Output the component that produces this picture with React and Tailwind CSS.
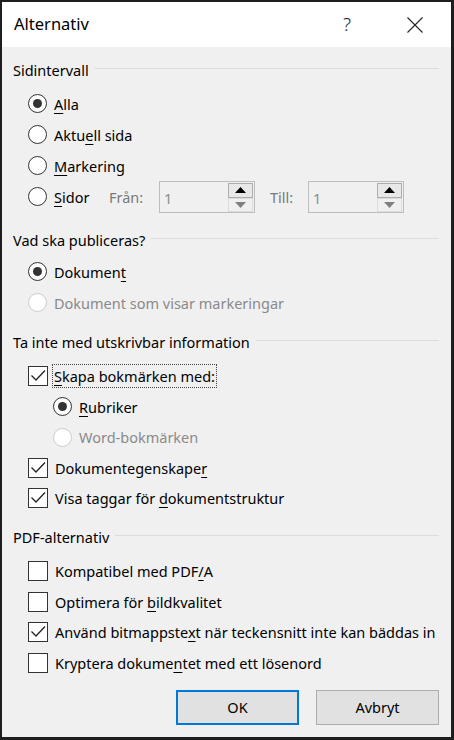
import React from "react";

const font = { fontFamily: '"Segoe UI", "Noto Sans", sans-serif' };

function U({ children }) {
  return <span className="underline underline-offset-[3px] decoration-1">{children}</span>;
}

function Radio({ checked, disabled }) {
  return (
    <span
      className={
        "flex h-[19px] w-[19px] shrink-0 items-center justify-center rounded-full border bg-white " +
        (disabled ? "border-[#cccccc]" : "border-[#333333]")
      }
    >
      {checked && <span className="h-[9px] w-[9px] rounded-full bg-[#333333]" />}
    </span>
  );
}

function Check({ checked }) {
  return (
    <span className="flex h-[20px] w-[20px] shrink-0 items-center justify-center border border-[#333333] bg-white">
      {checked && (
        <svg width="18" height="18" viewBox="0 0 18 18">
          <path d="M2.5 8.5 L7 13 L16 3.5" fill="none" stroke="#222" strokeWidth="1.3" />
        </svg>
      )}
    </span>
  );
}

function Heading({ children, className = "" }) {
  return (
    <div className={"flex h-[20px] items-center pr-[12px] " + className}>
      <span className="text-[14.5px] leading-[20px] text-black">{children}</span>
      <span className="ml-[6px] mt-[-3px] h-px flex-1 bg-[#dcdcdc]" />
    </div>
  );
}

function RadioRow({ checked, disabled, children, indent = "pl-[15px]", h = "h-[31px]" }) {
  return (
    <div className={"flex items-center " + indent + " " + h}>
      <Radio checked={checked} disabled={disabled} />
      <span className={"ml-[7px] text-[14.5px] leading-[20px] " + (disabled ? "text-[#8a8a8a]" : "text-black")}>
        {children}
      </span>
    </div>
  );
}

function CheckRow({ checked, children, focus }) {
  return (
    <div className="flex h-[30.5px] items-center pl-[15px]">
      <Check checked={checked} />
      <span
        className={
          "ml-[5px] text-[14.5px] leading-[20px] text-black " +
          (focus ? "outline outline-1 outline-dotted outline-[#444] px-[1px] py-[1px]" : "pl-[2px]")
        }
      >
        {children}
      </span>
    </div>
  );
}

function Spinner() {
  return (
    <div className="flex h-[32px] w-[96px] items-start border border-[#bdbdbd] bg-[#f0f0f0]">
      <span className="ml-[4px] mt-[6px] text-[14.5px] leading-[20px] text-[#8a8a8a]">1</span>
      <div className="ml-auto mr-[1px] mt-[1px] flex flex-col">
        <div className="flex h-[15px] w-[25px] items-center justify-center border border-[#adadad] bg-[#e8e8e8]">
          <svg width="11" height="6" viewBox="0 0 11 6">
            <path d="M0 6 L5.5 0 L11 6 Z" fill="#000" />
          </svg>
        </div>
        <div className="flex h-[14px] w-[25px] items-center justify-center border border-[#dcdcdc] bg-[#f0f0f0]">
          <svg width="11" height="6" viewBox="0 0 11 6">
            <path d="M0 0 L11 0 L5.5 6 Z" fill="#808080" />
          </svg>
        </div>
      </div>
    </div>
  );
}

export default function App() {
  return (
    <div
      style={font}
      className="flex h-[740px] w-[454px] flex-col border-l-2 border-t-2 border-r-[3px] border-b-[3px] border-[#1e1e1e] bg-[#f0f0f0]"
    >
      {/* title bar */}
      <div className="flex h-[45px] shrink-0 items-center bg-white">
        <span className="ml-[12px] text-[16.5px] text-black">Alternativ</span>
        <span className="ml-auto mr-[56px] text-[19px] font-light text-[#222]">?</span>
        <svg width="16" height="16" viewBox="0 0 16 16" className="mr-[28px]">
          <path d="M0.5 0.5 L15.5 15.5 M15.5 0.5 L0.5 15.5" stroke="#222" strokeWidth="1.1" />
        </svg>
      </div>

      <div className="flex flex-1 flex-col pl-[11px]">
        <Heading className="mt-[13px]">Sidintervall</Heading>
        <div className="mt-[8px]">
          <RadioRow checked>
            <U>A</U>lla
          </RadioRow>
          <RadioRow>
            Aktu<U>e</U>ll sida
          </RadioRow>
          <RadioRow>
            <U>M</U>arkering
          </RadioRow>
          <div className="flex h-[31px] items-center pl-[15px]">
            <Radio />
            <span className="ml-[7px] w-[55px] text-[14.5px] leading-[20px] text-black">
              <U>S</U>idor
            </span>
            <span className="w-[50px] text-[14.5px] leading-[20px] text-[#7a7a7a]">Från:</span>
            <Spinner />
            <span className="ml-[15px] w-[38px] text-[14.5px] leading-[20px] text-[#7a7a7a]">Till:</span>
            <Spinner />
          </div>
        </div>

        <Heading className="mt-[18px]">Vad ska publiceras?</Heading>
        <div className="mt-[6px]">
          <RadioRow checked>
            Dokumen<U>t</U>
          </RadioRow>
          <RadioRow disabled>Dokument som visar markeringar</RadioRow>
        </div>

        <Heading className="mt-[14px]">Ta inte med utskrivbar information</Heading>
        <div className="mt-[9px]">
          <CheckRow checked focus>
            <U>S</U>kapa bokmärken med:
          </CheckRow>
          <RadioRow checked indent="pl-[40px]" h="h-[30.5px]">
            <U>R</U>ubriker
          </RadioRow>
          <RadioRow disabled indent="pl-[40px]" h="h-[30.5px]">
            Word-bokmärken
          </RadioRow>
          <CheckRow checked>
            Dokumentegenskape<U>r</U>
          </CheckRow>
          <CheckRow checked>
            Visa taggar för <U>d</U>okumentstruktur
          </CheckRow>
        </div>

        <Heading className="mt-[13.5px]">PDF-alternativ</Heading>
        <div className="mt-[9px]">
          <CheckRow>
            Kompatibel med PDF<U>/</U>A
          </CheckRow>
          <CheckRow>
            Optimera för <U>b</U>ildkvalitet
          </CheckRow>
          <CheckRow checked>
            Använd bitmappste<U>x</U>t när teckensnitt inte kan bäddas in
          </CheckRow>
          <CheckRow>
            Kryptera dokume<U>n</U>tet med ett lösenord
          </CheckRow>
        </div>

        <div className="mt-[12px] flex gap-[17px] pl-[163px]">
          <button className="h-[35px] w-[123px] border-2 border-[#0078d7] bg-[#e1e1e1] text-[14.5px] text-black">
            OK
          </button>
          <button className="h-[35px] w-[123px] border border-[#adadad] bg-[#e1e1e1] text-[14.5px] text-black">
            Avbryt
          </button>
        </div>
      </div>
    </div>
  );
}
